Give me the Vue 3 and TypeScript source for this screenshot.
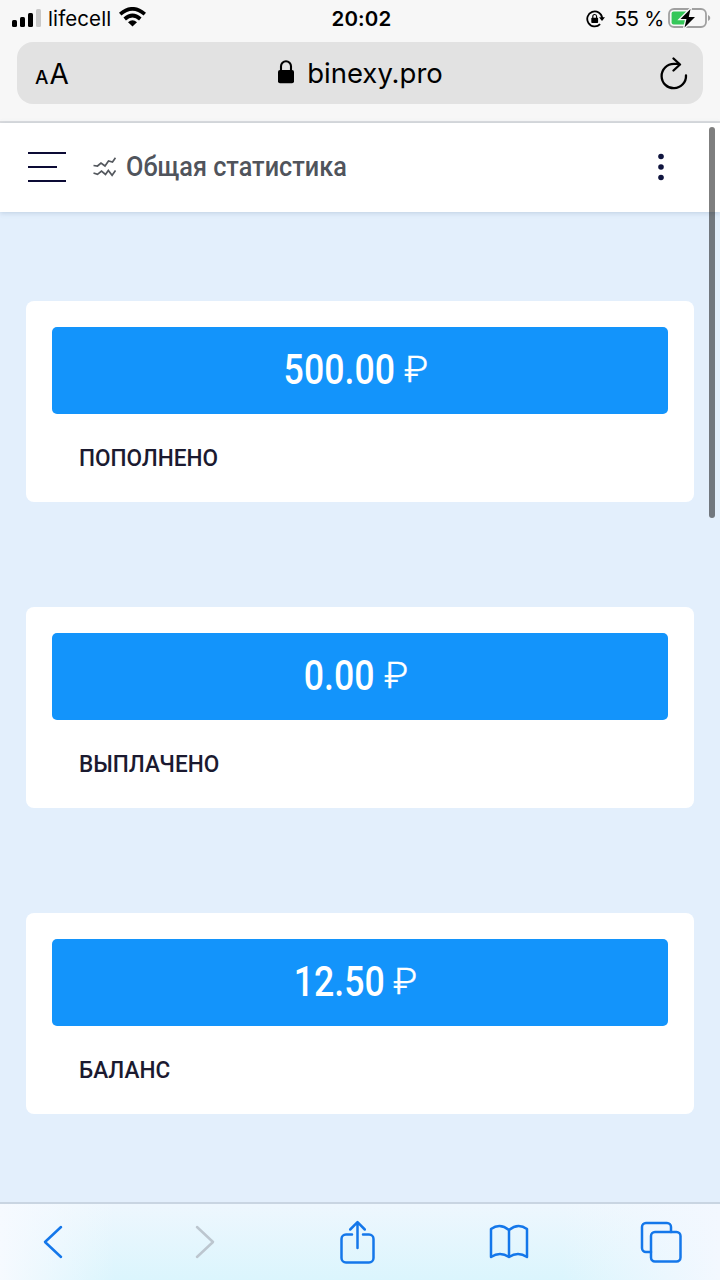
<script setup lang="ts">
interface Stat {
  label: string
  value: string
  kind: string
}

const stats: Stat[] = [
  { label: 'ПОПОЛНЕНО', value: '500.00', kind: 'deposited' },
  { label: 'ВЫПЛАЧЕНО', value: '0.00', kind: 'paid' },
  { label: 'БАЛАНС', value: '12.50', kind: 'balance' },
]
</script>

<template>
  <div class="screen">
    <header class="browser">
      <div class="status">
        <div class="status-left">
          <svg class="signal" width="30" height="18" viewBox="0 0 30 18">
            <rect x="0" y="11" width="5" height="7" rx="1.5" />
            <rect x="8" y="8" width="5" height="10" rx="1.5" />
            <rect x="16" y="4" width="5" height="14" rx="1.5" />
            <rect x="24" y="0" width="5" height="18" rx="1.5" fill="#c9c9c9" />
          </svg>
          <span class="carrier">lifecell</span>
          <svg class="wifi" width="27" height="20" viewBox="0 0 27 20">
            <g fill="none" stroke="#000" stroke-width="3.7">
              <path d="M1.2 7.2Q13.5-3.5 25.8 7.2" />
              <path d="M5.7 12Q13.5 5 21.3 12" />
            </g>
            <path d="M9 15.2Q13.5 11.2 18 15.2L13.5 19.5Z" />
          </svg>
        </div>
        <span class="clock">20:02</span>
        <div class="status-right">
          <svg class="rotation" width="19" height="18" viewBox="0 0 19 18">
            <path d="M14.1 14.2A7.5 7.5 0 1 1 16.2 8" fill="none" stroke="#000" stroke-width="1.8" />
            <path d="M13 7.3h6l-3 3.6z" />
            <rect x="5.3" y="7.8" width="6.8" height="5.1" rx=".7" />
            <path d="M6.8 8V6.4a1.9 1.9 0 0 1 3.8 0V8" fill="none" stroke="#000" stroke-width="1.2" />
          </svg>
          <span class="percent">55 %</span>
          <svg class="battery" width="43" height="22" viewBox="0 0 43 22">
            <rect x="1" y="2" width="37" height="18" rx="5" fill="none" stroke="#a0a0a0" stroke-width="1.8" />
            <path d="M40 8q2.3 1 2.3 3T40 14z" fill="#a0a0a0" />
            <rect x="3.6" y="4.5" width="16" height="13" rx="2" fill="#35c759" />
            <path d="M22.5 2 12.5 12h6L16.5 20.5 27 10h-6.2z" stroke="#f7f7f7" stroke-width="2.6" />
            <path d="M22.5 2 12.5 12h6L16.5 20.5 27 10h-6.2z" />
          </svg>
        </div>
      </div>
      <div class="address">
        <span class="text-size"><small>A</small><b>A</b></span>
        <div class="site">
          <svg width="16" height="24" viewBox="0 0 16 24">
            <rect x="0" y="10" width="16" height="13.3" rx="2" />
            <path d="M3 11V6.2a5 5 0 0 1 10 0V11" fill="none" stroke="#000" stroke-width="2.1" />
          </svg>
          <span class="domain">binexy.pro</span>
        </div>
        <svg class="reload" width="28" height="33" viewBox="0 0 28 33" fill="none" stroke="#000" stroke-width="2.3" stroke-linecap="round" stroke-linejoin="round">
          <path d="M26 18.5A12.2 12.2 0 1 1 13.8 6.8H19" />
          <path d="M13.5 1.5 20 7.5 13.5 13.5" />
        </svg>
      </div>
    </header>

    <div class="page">
      <nav class="topbar">
        <svg class="menu" width="38" height="32" viewBox="0 0 38 32" stroke="#0c0b35" stroke-width="1.8">
          <path d="M0 2h38M0 16h29M0 30h38" />
        </svg>
        <svg class="trend" width="23" height="20" viewBox="0 0 23 20" fill="none" stroke="#54585e" stroke-width="1.7">
          <path d="M.5 8.5 4.5 9 8 6l4 3 3.5-5 4 1L22.5.8" />
          <path d="m.5 16 4 1.3L8.5 14l4 3.5 2.8-4 3.8 4.8 3.4-4.8" />
        </svg>
        <h1><span>Общая статистика</span></h1>
        <svg class="dots" width="6" height="28" viewBox="0 0 6 28" fill="#10153f">
          <circle cx="3" cy="3.5" r="2.8" />
          <circle cx="3" cy="14" r="2.8" />
          <circle cx="3" cy="24.5" r="2.8" />
        </svg>
      </nav>
      <main>
        <section v-for="stat in stats" :key="stat.kind" class="card">
          <div class="amount">
            <span class="number" :class="stat.kind"><span>{{ stat.value }}</span></span>
            <span class="ruble">₽</span>
          </div>
          <p class="label"><span>{{ stat.label }}</span></p>
        </section>
      </main>
      <i class="scrollbar"></i>
    </div>

    <footer class="toolbar">
      <svg class="back" width="20" height="34" viewBox="0 0 20 34"><path d="M18 2 2 17l16 15" /></svg>
      <svg class="forward" width="20" height="34" viewBox="0 0 20 34"><path d="m2 2 16 15L2 32" /></svg>
      <svg class="share" width="35" height="44" viewBox="0 0 35 44">
        <path d="M12 14.5H6a4.5 4.5 0 0 0-4.5 4.5v19A4.5 4.5 0 0 0 6 42.5h23a4.5 4.5 0 0 0 4.5-4.5V19a4.5 4.5 0 0 0-4.5-4.5h-6M17.5 28V2.5M10.2 9.5l7.3-7.3 7.3 7.3" />
      </svg>
      <svg class="book" width="40" height="36" viewBox="0 0 40 36">
        <path d="M20 6Q11-1.5 2 5v28q9-6 18 0 9-6 18 0V5Q29-1.5 20 6v27" />
      </svg>
      <svg class="tabs" width="42" height="42" viewBox="0 0 42 42">
        <path d="M11 31H6a4 4 0 0 1-4-4V6a4 4 0 0 1 4-4h21a4 4 0 0 1 4 4v5" />
        <rect x="11" y="11" width="29.5" height="29.5" rx="4" />
      </svg>
    </footer>
  </div>
</template>

<style>
body {
  background: #e3effc;
}
</style>

<style scoped>
* {
  box-sizing: border-box;
}
.screen {
  width: 720px;
  height: 1280px;
  display: flex;
  flex-direction: column;
  overflow: hidden;
  font-family: Roboto, "Noto Sans", sans-serif;
}
svg {
  display: block;
  flex: none;
}
span {
  white-space: nowrap;
}
.browser {
  height: 123px;
  flex: none;
  background: #f7f7f7;
  border-bottom: 2px solid #dcdddf;
  color: #000;
  font-family: Inter, sans-serif;
}
.status {
  height: 42px;
  display: grid;
  grid-template-columns: 1fr auto 1fr;
  padding: 0 9px 5px 12px;
  align-items: center;
}
.status-left,
.status-right {
  display: flex;
  align-items: center;
}
.status-right {
  justify-content: flex-end;
}
.signal {
  margin-top: -2px;
}
.carrier {
  width: 62px;
  margin-left: 6px;
  font-size: 20.5px;
  letter-spacing: 0.1px;
}
.wifi {
  margin: -3px 0 0 9px;
}
.clock {
  font-size: 20.5px;
  font-weight: 600;
  letter-spacing: 0.2px;
}
.percent {
  font-size: 20.5px;
  letter-spacing: -0.3px;
  margin: 0 4px 0 9px;
}
.battery {
  margin-top: -1px;
}
.address {
  height: 62px;
  margin: 0 17px;
  padding: 0 15px 0 18px;
  border-radius: 16px;
  background: #e2e2e2;
  display: grid;
  grid-template-columns: 1fr auto 1fr;
  align-items: center;
}
.text-size {
  display: flex;
  align-items: baseline;
  gap: 1px;
  line-height: 34px;
  padding-top: 6px;
}
.text-size small {
  font-size: 19px;
  font-weight: 500;
}
.text-size b {
  font-size: 28px;
  font-weight: 400;
}
.site {
  display: flex;
  align-items: center;
  gap: 13px;
  margin-right: 2px;
}
.site svg {
  margin-top: -2px;
}
.domain {
  font-size: 27.5px;
  letter-spacing: 0;
}
.reload {
  justify-self: end;
}
.page {
  position: relative;
  flex: 1;
  background: #e3effc;
}
.topbar {
  height: 89px;
  background: #fff;
  box-shadow: 0 1px 5px rgba(80, 110, 150, 0.25);
  display: flex;
  align-items: center;
  padding: 0 56px 2px 28px;
}
.trend {
  margin-left: 27px;
}
h1 {
  flex: 1;
  margin: 0 0 0 10px;
  font-size: 27px;
  font-weight: 500;
  color: #50545c;
}
h1 span,
.label span {
  display: inline-block;
  transform-origin: left center;
}
h1 span {
  transform: scaleX(0.935);
}
main {
  display: flex;
  flex-direction: column;
  gap: 105px;
  padding: 89px 26px 0 26px;
}
.card {
  height: 201px;
  padding: 26px;
  border-radius: 8px;
  background: #fff;
  width: 667.5px;
}
.amount {
  height: 87px;
  border-radius: 5px;
  background: #1394fb;
  color: #fff;
  display: flex;
  align-items: center;
  justify-content: center;
  gap: 10px;
  padding: 0 8px 2px 0;
}
.number {
  display: flex;
  justify-content: center;
  font-size: 42.5px;
  font-weight: 500;
}
.number span {
  transform: scaleX(0.84);
}
.number.deposited {
  width: 111px;
}
.number.paid {
  width: 71px;
}
.number.balance {
  width: 89px;
}
.ruble {
  font-size: 37px;
  font-weight: 300;
  -webkit-text-stroke: 0.4px #fff;
}
.label {
  margin: 29px 0 0 27px;
  font-size: 23.5px;
  line-height: 30px;
  font-weight: 500;
  color: #1b1a30;
}
.label span {
  transform: scaleX(0.96);
}
.scrollbar {
  position: absolute;
  top: 4px;
  right: 5px;
  width: 6px;
  height: 391px;
  border-radius: 3px;
  background: rgba(0, 0, 0, 0.5);
}
.toolbar {
  height: 78px;
  flex: none;
  border-top: 2px solid #c9d5e2;
  background: linear-gradient(90deg, #f6faff 0, rgba(246, 250, 255, 0) 16%, rgba(246, 250, 255, 0) 78%, #f3f8ff 100%), linear-gradient(#eef7fe, #dbf5fd);
  display: flex;
  align-items: center;
  justify-content: space-between;
  padding: 0 38px 1px 32px;
  fill: none;
  stroke: #1477ea;
  stroke-width: 2.5;
  stroke-linecap: round;
  stroke-linejoin: round;
}
.back,
.forward {
  margin: 0 11px;
}
.forward {
  stroke: #bcc6cf;
}
.share {
  margin: 0 3.5px;
}
.book {
  margin: 0 1px;
}
</style>
